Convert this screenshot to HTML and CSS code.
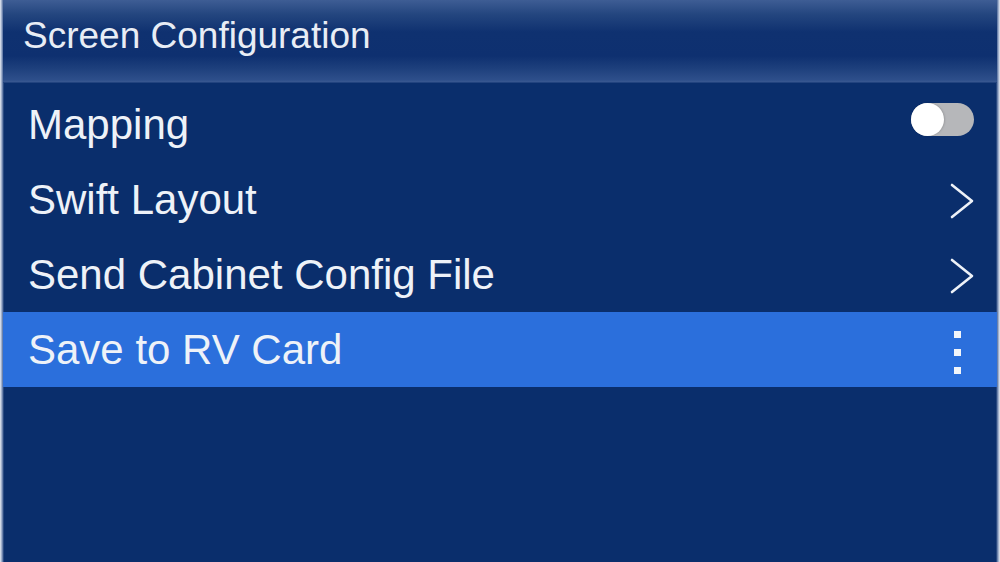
FILE: index.html
```html
<!DOCTYPE html>
<html lang="en">
<head>
<meta charset="utf-8">
<title>Screen Configuration</title>
<link rel="stylesheet" href="styles.css">
</head>
<body>
<div class="screen">
  <header class="header">Screen Configuration</header>
  <ul class="menu">
    <li class="item">
      <span class="label">Mapping</span>
      <span class="toggle"><span class="knob"></span></span>
    </li>
    <li class="item">
      <span class="label">Swift Layout</span>
      <svg class="chevron" width="24" height="36" viewBox="0 0 24 36"><polyline points="2,2 22,18 2,34" fill="none" stroke="#eef2f8" stroke-width="2.6" stroke-linecap="round" stroke-linejoin="round"/></svg>
    </li>
    <li class="item">
      <span class="label">Send Cabinet Config File</span>
      <svg class="chevron" width="24" height="36" viewBox="0 0 24 36"><polyline points="2,2 22,18 2,34" fill="none" stroke="#eef2f8" stroke-width="2.6" stroke-linecap="round" stroke-linejoin="round"/></svg>
    </li>
    <li class="item selected">
      <span class="label">Save to RV Card</span>
      <span class="dots"><i></i><i></i><i></i></span>
    </li>
  </ul>
</div>
</body>
</html>
```

FILE: styles.css
```css
html, body {
  margin: 0;
  padding: 0;
}
body {
  width: 1000px;
  height: 562px;
  overflow: hidden;
  background: #0a2e6c;
  font-family: "Liberation Sans", Arial, sans-serif;
  color: #eef2f8;
}
.screen {
  box-sizing: border-box;
  width: 1000px;
  height: 562px;
  padding: 0 3px;
  background: linear-gradient(to right, #e9edf4 0, #8a9dc0 2px, #0a2e6c 4px, #0a2e6c calc(100% - 4px), #8a9dc0 calc(100% - 2px), #e9edf4 100%);
}
.header {
  box-sizing: border-box;
  height: 83px;
  padding-left: 20px;
  font-size: 37px;
  line-height: 72px;
  color: #e8edf5;
  background: linear-gradient(to bottom, #3e5d94 0, #24467f 14px, #0f3170 32px, #0e3070 56px, #1d3f7c 68px, #2e4f8b 80px, #3a5891 82px, #0a2e6c 83px);
}
.menu {
  list-style: none;
  margin: 0;
  padding: 4px 0 0;
}
.item {
  display: flex;
  align-items: center;
  justify-content: space-between;
  height: 75px;
  padding: 0 23px 0 25px;
}
.label {
  font-size: 42px;
  line-height: 75px;
  white-space: nowrap;
}
.selected {
  background: #2b6fdc;
}
.toggle {
  position: relative;
  width: 63px;
  height: 33px;
  margin-bottom: 10px;
  border-radius: 17px;
  background: #b6b7ba;
}
.knob {
  position: absolute;
  left: 0;
  top: 0;
  width: 33px;
  height: 33px;
  border-radius: 50%;
  background: #ffffff;
  box-shadow: 1px 0 2px rgba(0, 0, 0, 0.15);
}
.chevron {
  display: block;
  margin-top: 2px;
}
.dots {
  display: flex;
  flex-direction: column;
  gap: 11px;
  margin-right: 13px;
  margin-top: 6px;
}
.dots i {
  display: block;
  width: 7px;
  height: 7px;
  background: #f2f5fa;
}
```
